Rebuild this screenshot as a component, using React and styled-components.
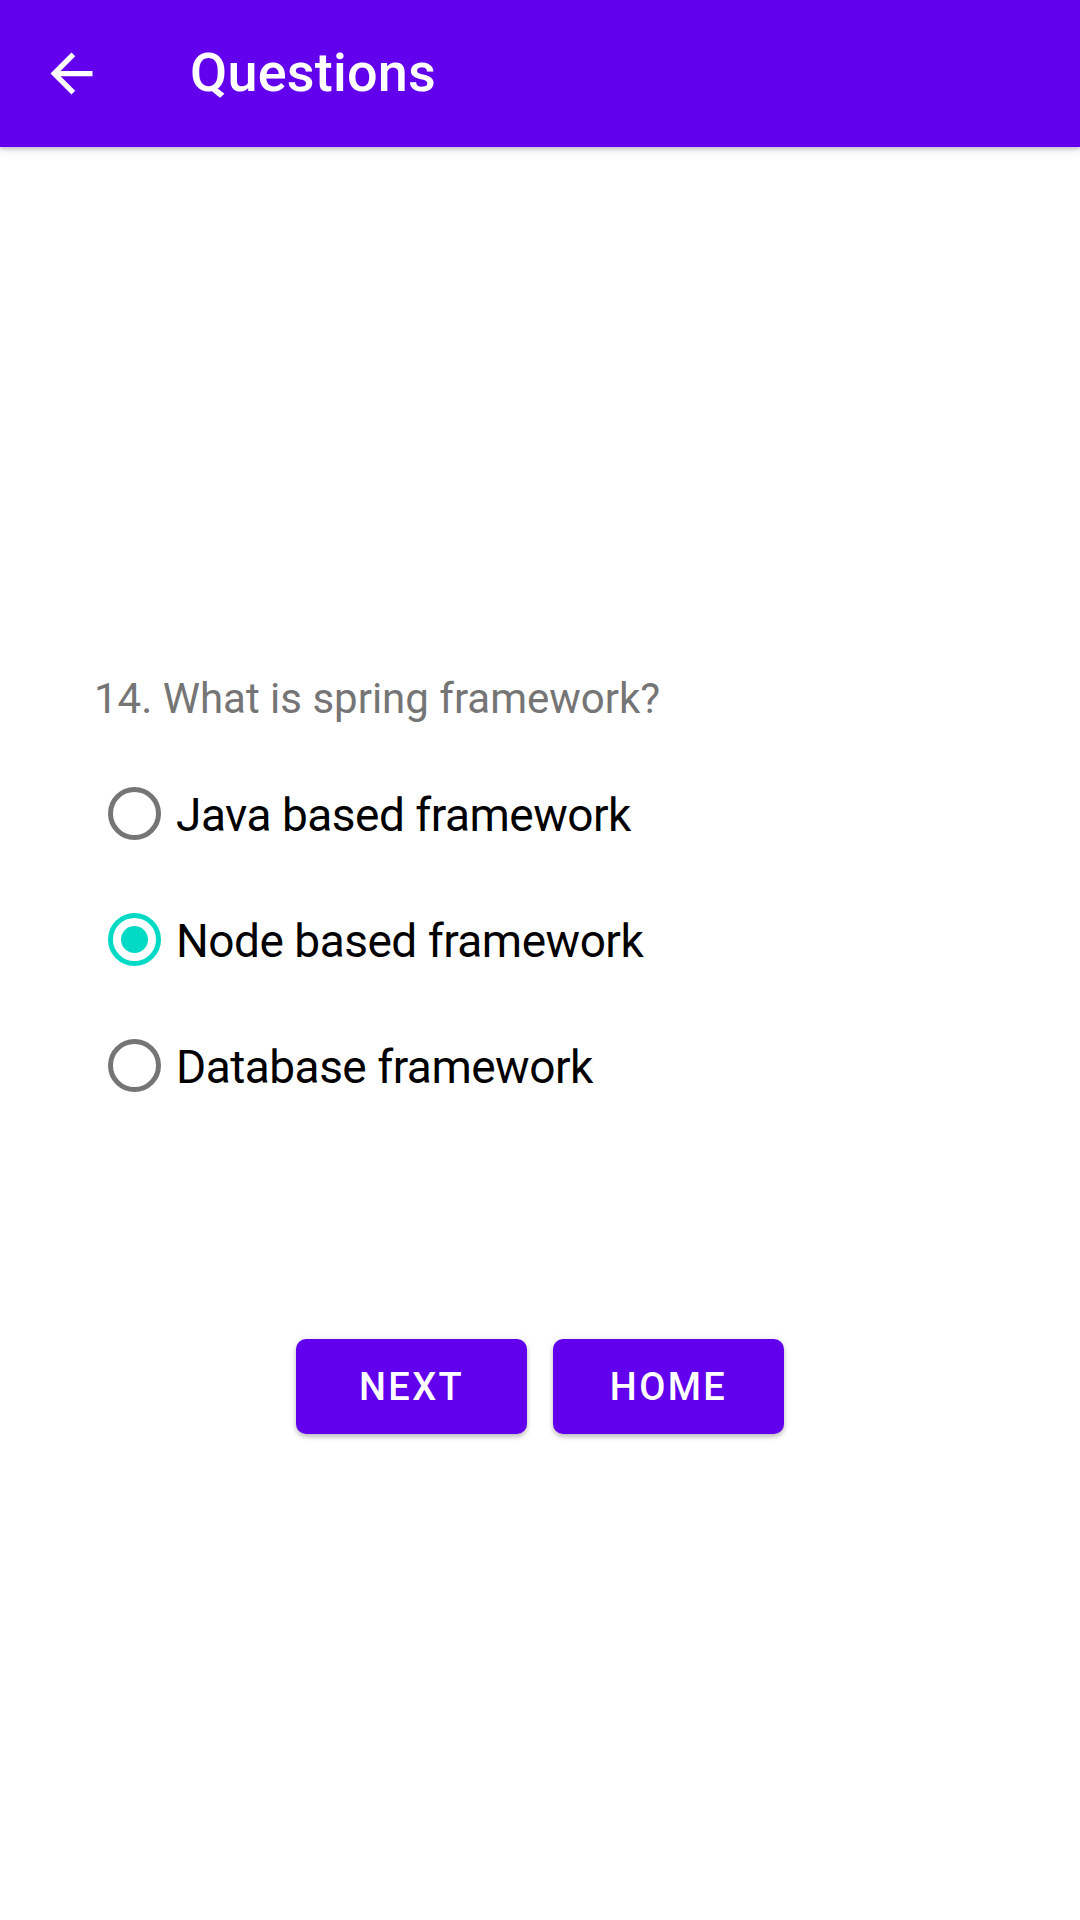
import React, { useState } from 'react';
import styled, { createGlobalStyle } from 'styled-components';

// ========================================
// GLOBAL STYLES
// ========================================

const GlobalStyle = createGlobalStyle`
  html, body {
    margin: 0;
    padding: 0;
    background: #ffffff;
  }
  body {
    font-family: Roboto, "Liberation Sans", sans-serif;
    -webkit-font-smoothing: antialiased;
  }
`;

// ========================================
// STYLED COMPONENTS
// ========================================

const Screen = styled.div`
  width: 1080px;
  min-height: 1920px;
  background: #ffffff;
  display: flex;
  flex-direction: column;
`;

// Top app bar
const AppBar = styled.header`
  height: 147px;
  background: #6200ee;
  display: flex;
  align-items: center;
  padding-left: 40px;
  box-shadow: 0 2px 4px rgba(0, 0, 0, 0.2), 0 4px 10px rgba(0, 0, 0, 0.08);
  position: relative;
  z-index: 1;
`;

const NavButton = styled.button`
  width: 63px;
  height: 63px;
  padding: 0;
  border: none;
  background: transparent;
  display: flex;
  align-items: center;
  justify-content: center;
  cursor: pointer;
`;

const Title = styled.h1`
  margin: 0 0 2px 87px;
  font-size: 54px;
  font-weight: 500;
  color: #ffffff;
  letter-spacing: 0.2px;
`;

// Question body
const Body = styled.main`
  display: flex;
  flex-direction: column;
  padding: 527px 90px 0 90px;
`;

const Question = styled.p`
  margin: 0 0 27px 4px;
  font-size: 42px;
  line-height: 49px;
  color: #757575;
`;

const OptionList = styled.div`
  display: flex;
  flex-direction: column;
`;

const OptionRow = styled.label`
  height: 126px;
  display: flex;
  align-items: center;
  padding-left: 18px;
  cursor: pointer;
`;

const RadioCircle = styled.span`
  box-sizing: border-box;
  width: 53px;
  height: 53px;
  border-radius: 50%;
  border: 5px solid ${p => (p.$checked ? '#03dac5' : '#757575')};
  display: flex;
  align-items: center;
  justify-content: center;
  flex-shrink: 0;

  &::after {
    content: '';
    width: 27px;
    height: 27px;
    border-radius: 50%;
    background: #03dac5;
    display: ${p => (p.$checked ? 'block' : 'none')};
  }
`;

const OptionText = styled.span`
  margin-left: 15px;
  padding-top: 4px;
  font-size: 46px;
  letter-spacing: -0.5px;
  color: #000000;
`;

// Bottom actions
const Actions = styled.div`
  display: flex;
  justify-content: center;
  gap: 26px;
  margin-top: 211px;
`;

const ActionButton = styled.button`
  width: 231px;
  height: 95px;
  border: none;
  border-radius: 10px;
  background: #6200ee;
  color: #ffffff;
  font-family: Roboto, "Liberation Sans", sans-serif;
  font-size: 38px;
  font-weight: 500;
  letter-spacing: 2.4px;
  text-transform: uppercase;
  box-shadow: 0 3px 4px rgba(0, 0, 0, 0.2), 0 1px 8px rgba(0, 0, 0, 0.1);
  cursor: pointer;
`;

// ========================================
// ICONS
// ========================================

const BackArrow = () => (
  <svg width="63" height="63" viewBox="0 0 24 24" fill="#ffffff">
    <path d="M20 11H7.83l5.59-5.59L12 4l-8 8 8 8 1.41-1.41L7.83 13H20v-2z" />
  </svg>
);

// ========================================
// APP
// ========================================

const options = ['Java based framework', 'Node based framework', 'Database framework'];

export default function App() {
  const [selected, setSelected] = useState(1);

  return (
    <Screen>
      <GlobalStyle />
      <AppBar>
        <NavButton aria-label="Back">
          <BackArrow />
        </NavButton>
        <Title>Questions</Title>
      </AppBar>

      <Body>
        <Question>14. What is spring framework?</Question>
        <OptionList>
          {options.map((opt, i) => (
            <OptionRow key={opt} onClick={() => setSelected(i)}>
              <RadioCircle $checked={selected === i} />
              <OptionText>{opt}</OptionText>
            </OptionRow>
          ))}
        </OptionList>
      </Body>

      <Actions>
        <ActionButton>Next</ActionButton>
        <ActionButton>Home</ActionButton>
      </Actions>
    </Screen>
  );
}
